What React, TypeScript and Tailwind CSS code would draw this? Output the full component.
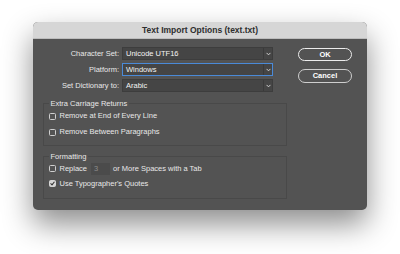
import React from 'react';

const font = { fontFamily: '"Liberation Sans", Arial, sans-serif' };

function Chevron() {
  return (
    <svg className="w-[5px] h-[4px]" viewBox="0 0 6 4" fill="none" stroke="#d0d0d0" strokeWidth="1.2" strokeLinecap="round" strokeLinejoin="round">
      <path d="M1 1l2 2 2-2" />
    </svg>
  );
}

function Select({ value, focused = false }: { value: string; focused?: boolean }) {
  return (
    <div
      className={`w-[151px] h-[13px] flex items-stretch bg-[#454545] border ${
        focused ? 'border-[#4a8ad8]' : 'border-[#3d3d3d]'
      }`}
    >
      <span className="flex-1 flex items-center pl-[3px] text-[7.5px] text-[#f4f4f4] leading-none">{value}</span>
      <span className="w-[9px] flex items-center justify-center border-l border-[#3a3a3a]">
        <Chevron />
      </span>
    </div>
  );
}

function Checkbox({ checked = false }: { checked?: boolean }) {
  return (
    <span
      className={`w-[7px] h-[7px] rounded-[1.5px] border flex items-center justify-center shrink-0 ${
        checked ? 'bg-[#d6d6d6] border-[#d6d6d6]' : 'border-[#cfcfcf]'
      }`}
    >
      {checked && (
        <svg className="w-[5px] h-[5px]" viewBox="0 0 6 6" fill="none" stroke="#3c3c3c" strokeWidth="1.3" strokeLinecap="round" strokeLinejoin="round">
          <path d="M1 3.2l1.4 1.4L5 1.4" />
        </svg>
      )}
    </span>
  );
}

export default function App() {
  const rows = [
    { label: 'Character Set:', value: 'Unicode UTF16' },
    { label: 'Platform:', value: 'Windows', focused: true },
    { label: 'Set Dictionary to:', value: 'Arabic' },
  ];

  return (
    <div className="w-[400px] h-[254px] bg-white pt-[22px] pl-[33px]" style={font}>
      <div className="w-[334px] h-[188px] rounded-[5px] overflow-hidden bg-[#535353] shadow-[0_14px_30px_rgba(0,0,0,0.45)]">
        {/* title bar */}
        <div className="h-[17px] bg-[#d6d6d6] border-b border-[#bdbdbd] flex items-center justify-center">
          <span className="text-[8.5px] font-bold text-[#2e2e2e] leading-none">Text Import Options (text.txt)</span>
        </div>

        <div className="text-[7.5px] text-[#e8e8e8] leading-none">
          <div className="flex pt-[8px]">
            <div className="flex flex-col gap-[3px] pl-[10px]">
              {rows.map((r) => (
                <div key={r.label} className="flex items-center gap-[3px]">
                  <span className="w-[76px] text-right">{r.label}</span>
                  <Select value={r.value} focused={r.focused} />
                </div>
              ))}
            </div>
            <div className="flex flex-col gap-[8px] ml-[25px] pt-[1px]">
              <button className="w-[54px] h-[13px] rounded-full border-[1.5px] border-[#ececec] text-[7.5px] font-bold text-white leading-none">
                OK
              </button>
              <button className="w-[54px] h-[14px] rounded-full border border-[#cfcfcf] text-[7.5px] font-bold text-white leading-none">
                Cancel
              </button>
            </div>
          </div>

          <fieldset className="ml-[10px] mt-[7px] w-[244px] border border-[#494949] pl-[5px] pb-[5px]">
            <legend className="px-[1.5px] h-[9px] leading-[9px]">Extra Carriage Returns</legend>
            <div className="h-[16px] flex items-center gap-[3.5px]">
              <Checkbox />
              <span>Remove at End of Every Line</span>
            </div>
            <div className="h-[16px] flex items-center gap-[3.5px]">
              <Checkbox />
              <span>Remove Between Paragraphs</span>
            </div>
          </fieldset>

          <fieldset className="ml-[10px] mt-[6px] w-[244px] border border-[#494949] pl-[5px] pb-[7px]">
            <legend className="px-[1.5px] h-[9px] leading-[9px]">Formatting</legend>
            <div className="h-[15px] flex items-center">
              <Checkbox />
              <span className="ml-[3.5px]">Replace</span>
              <span className="ml-[4px] w-[19px] h-[12px] bg-[#4b4b4b] flex items-center pl-[3px] text-[#8c8c8c]">3</span>
              <span className="ml-[3px]">or More Spaces with a Tab</span>
            </div>
            <div className="h-[15px] flex items-center gap-[3.5px]">
              <Checkbox checked />
              <span>Use Typographer's Quotes</span>
            </div>
          </fieldset>
        </div>
      </div>
    </div>
  );
}
